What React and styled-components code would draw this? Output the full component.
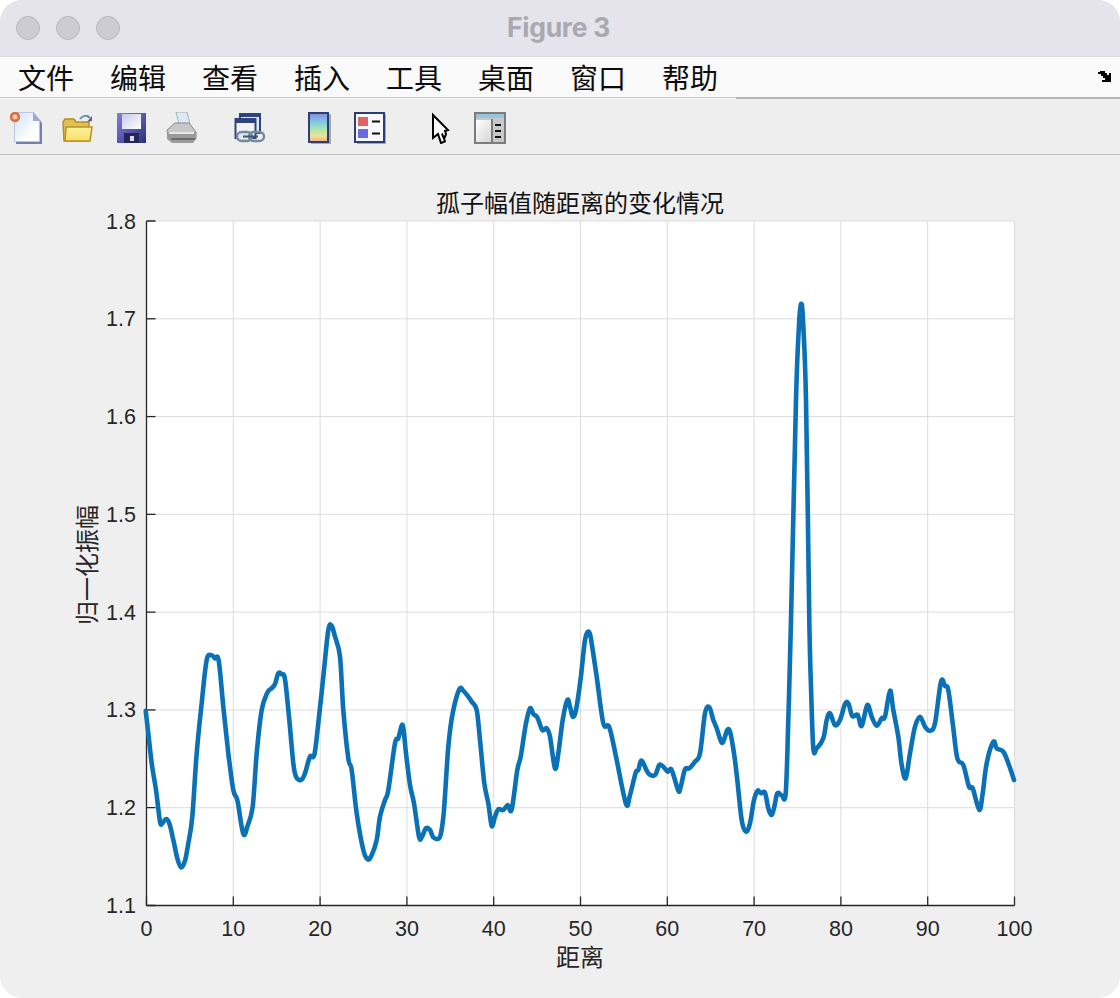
import React from "react";
import styled, { createGlobalStyle } from "styled-components";

const CJK = `"Noto Sans CJK SC", "Noto Sans", sans-serif`;
const LATIN = `"Liberation Sans", "Noto Sans CJK SC", sans-serif`;

const GlobalStyle = createGlobalStyle`
    html, body {
        margin: 0;
        padding: 0;
        background: #ffffff;
    }
`;

const Window = styled.div`
    width: 1120px;
    height: 998px;
    display: flex;
    flex-direction: column;
    border-radius: 22px;
    overflow: hidden;
    background: #efefef;
`;

const TitleBar = styled.div`
    height: 56px;
    flex: none;
    display: flex;
    align-items: center;
    background: #e5e3ec;
    border-bottom: 1px solid #d9d8dd;
    padding-left: 16px;
`;

const Light = styled.span`
    box-sizing: border-box;
    width: 24px;
    height: 24px;
    margin-right: 16px;
    border-radius: 50%;
    background: #cdcbd4;
    border: 1px solid #b9b7c0;
`;

const WindowTitle = styled.div`
    flex: 1;
    margin-right: 139px;
    padding-bottom: 2px;
    text-align: center;
    font: bold 26.5px "Inter", ${LATIN};
    letter-spacing: -0.3px;
    color: #aaa8b0;
`;

const MenuBar = styled.div`
    height: 40px;
    flex: none;
    display: flex;
    align-items: center;
    gap: 38px;
    padding-left: 18px;
    padding-right: 8px;
    background: #fafafa;
`;

const MenuItem = styled.span`
    font: 400 28px/40px ${CJK};
    width: 54px;
    white-space: nowrap;
    color: #0c0c0c;
`;

const MenuArrow = styled.svg`
    margin-left: auto;
    width: 14px;
    height: 11px;
    margin-top: -2px;
`;

const MenuRule = styled.div`
    height: 2px;
    flex: none;
    display: flex;
    background: #fafafa;
`;

const RuleLeft = styled.div`
    width: 736px;
    border-top: 1px solid #c9c9c9;
`;

const RuleRight = styled.div`
    flex: 1;
    background: #b4b4b4;
`;

const ToolBar = styled.div`
    height: 56px;
    flex: none;
    display: flex;
    align-items: flex-start;
    box-sizing: border-box;
    padding: 13px 0 0 10px;
    background: #eeeeee;
    border-bottom: 1px solid #c2c2c2;
`;

const Tool = styled.svg`
    width: 32px;
    height: 32px;
    flex: none;
    margin-left: ${(p) => p.$gap || 0}px;
`;

const Canvas = styled.svg`
    display: block;
    flex: 1;
    width: 1120px;
`;

const PlotArea = styled.rect`
    fill: #ffffff;
`;

const GridLine = styled.line`
    stroke: #dcdcdc;
    stroke-width: 1;
`;

const AxisLine = styled.line`
    stroke: #262626;
    stroke-width: 1.3;
`;

const TickLabel = styled.text`
    font: 400 21.5px ${LATIN};
    fill: #262626;
`;

const AxisTitle = styled.text`
    font: 400 24px ${CJK};
    fill: #262626;
    text-anchor: middle;
`;

const PlotTitle = styled.text`
    font: 400 24px ${CJK};
    fill: #111111;
    text-anchor: middle;
`;

const Trace = styled.path`
    fill: none;
    stroke: #0a71b6;
    stroke-width: 4.6;
    stroke-linejoin: round;
    stroke-linecap: round;
`;

const menus = ["文件", "编辑", "查看", "插入", "工具", "桌面", "窗口", "帮助"];

const LEFT = 146.5;
const RIGHT = 1014.5;
const TOP = 221;
const BOTTOM = 905.5;

const xPos = (v) => LEFT + ((RIGHT - LEFT) * v) / 100;
const yPos = (v) => TOP + ((BOTTOM - TOP) * (1.8 - v)) / 0.7;

const xTicks = [0, 10, 20, 30, 40, 50, 60, 70, 80, 90, 100];
const yTicks = [1.1, 1.2, 1.3, 1.4, 1.5, 1.6, 1.7, 1.8];

// traced from the plot, in three 3x crops
const traceA = [
    [47, 272], [55, 340], [65, 430], [78, 510], [90, 605], [97, 610], [108, 597], [118, 610], [130, 660], [142, 715],
    [153, 742], [165, 722], [175, 670], [187, 590], [200, 400], [215, 250], [230, 120], [245, 106], [255, 115], [266, 122],
    [280, 260], [295, 400], [310, 510], [322, 540], [335, 620], [343, 645], [352, 620], [368, 560], [380, 400], [395, 270],
    [412, 218], [425, 205], [435, 192], [445, 160], [455, 163], [465, 178], [478, 300], [490, 430], [498, 470], [513, 480],
    [525, 460], [540, 410], [553, 405], [565, 310], [580, 170], [595, 30], [605, 18], [615, 50], [630, 110], [640, 270],
    [655, 415], [665, 450], [680, 580], [700, 690], [713, 718], [725, 705], [740, 660], [750, 590], [765, 540], [775, 510],
    [795, 370], [805, 355], [818, 315], [828, 400], [840, 495], [852, 550], [867, 650], [875, 652], [888, 625],
];
const traceB = [
    [0, 630], [10, 652], [25, 656], [33, 640], [42, 570], [55, 380], [68, 280], [88, 208], [100, 212], [115, 230],
    [125, 245], [140, 270], [150, 360], [163, 490], [175, 550], [185, 618], [195, 590], [205, 568], [220, 570], [233, 555],
    [245, 568], [262, 450], [272, 410], [288, 310], [300, 265], [310, 282], [322, 292], [337, 330], [350, 325], [360, 350],
    [375, 445], [385, 400], [398, 300], [412, 240], [420, 260], [428, 290], [438, 270], [452, 175], [465, 60], [477, 35],
    [485, 70], [500, 170], [520, 310], [538, 322], [560, 420], [588, 552], [600, 525], [617, 458], [625, 450], [635, 422],
    [655, 460], [675, 465], [688, 435], [700, 440], [713, 455], [725, 450], [745, 512], [752, 500], [765, 448], [778, 445],
    [795, 425], [810, 400], [825, 280], [838, 262], [850, 300], [860, 325], [875, 368], [885, 350], [892, 330],
];
const traceC = [
    [0, 335], [12, 400], [22, 480], [35, 600], [48, 635], [60, 610], [72, 540], [83, 512], [93, 520], [105, 518],
    [115, 565], [125, 585], [133, 560], [142, 520], [155, 526], [167, 520], [175, 300], [183, 0], [198, -660], [207, -885],
    [213, -948], [219, -900], [228, -660], [238, 0], [243, 200], [250, 385], [260, 385], [280, 355], [290, 300], [300, 280],
    [315, 315], [330, 300], [345, 252], [355, 250], [367, 288], [383, 285], [395, 318], [412, 255], [425, 290], [440, 317],
    [455, 295], [465, 290], [480, 212], [490, 270], [505, 350], [515, 435], [527, 475], [540, 400], [555, 320], [570, 290],
    [585, 320], [600, 332], [615, 310], [633, 185], [645, 198], [655, 210], [668, 310], [682, 415], [700, 435], [717, 500],
    [728, 505], [748, 570], [758, 520], [770, 430], [790, 365], [800, 385], [820, 395], [835, 430], [852, 480],
];

const points = [
    ...traceA.map(([x, y]) => [130 + x / 3, 620 + y / 3]),
    ...traceB.map(([x, y]) => [430 + x / 3, 620 + y / 3]),
    ...traceC.map(([x, y]) => [730 + x / 3, 620 + y / 3]),
];

// catmull-rom through the traced points
function smoothPath(pts) {
    let d = `M${pts[0][0].toFixed(1)} ${pts[0][1].toFixed(1)}`;
    for (let i = 0; i < pts.length - 1; i++) {
        const p0 = pts[i - 1] || pts[i];
        const p1 = pts[i];
        const p2 = pts[i + 1];
        const p3 = pts[i + 2] || p2;
        const c1x = p1[0] + (p2[0] - p0[0]) / 6;
        const c1y = p1[1] + (p2[1] - p0[1]) / 6;
        const c2x = p2[0] - (p3[0] - p1[0]) / 6;
        const c2y = p2[1] - (p3[1] - p1[1]) / 6;
        d += `C${c1x.toFixed(1)} ${c1y.toFixed(1)} ${c2x.toFixed(1)} ${c2y.toFixed(1)} ${p2[0].toFixed(1)} ${p2[1].toFixed(1)}`;
    }
    return d;
}

const NewIcon = ({ gap }) => (
    <Tool $gap={gap} viewBox="0 0 32 32">
        <defs>
            <linearGradient id="paper" x1="0" y1="0" x2="1" y2="1">
                <stop offset="0" stopColor="#cfe0f8" />
                <stop offset="0.7" stopColor="#ffffff" />
            </linearGradient>
        </defs>
        <path d="M6 3h19l7 8v21H6z" fill="#7480ac" />
        <path d="M4.500 .5h19l6 8v21h-25z" fill="url(#paper)" stroke="#b8c6e4" />
        <path d="M23 0l8 9h-8z" fill="#a4a4d2" />
        <circle cx="5" cy="5" r="3.800" fill="#f4d4b0" stroke="#d8724a" strokeWidth="2.800" />
    </Tool>
);

const OpenIcon = ({ gap }) => (
    <Tool $gap={gap} viewBox="0 0 32 32">
        <defs>
            <linearGradient id="folder" x1="0" y1="0" x2="0" y2="1">
                <stop offset="0" stopColor="#fdf0a0" />
                <stop offset="1" stopColor="#fbe064" />
            </linearGradient>
        </defs>
        <path d="M1 10l2-3h9l2 3h13v19H2z" fill="#e2c050" stroke="#b48c28" strokeWidth="1.400" />
        <path d="M4 15h26l-2 14H3z" fill="url(#folder)" stroke="#b99228" strokeWidth="1.600" />
        <path d="M18 7c3-4 7-4 10-1" fill="none" stroke="#7088a8" strokeWidth="2" />
        <path d="M25 10l5-1v-5z" fill="#46688c" />
    </Tool>
);

const SaveIcon = ({ gap }) => (
    <Tool $gap={gap} viewBox="0 0 32 32">
        <defs>
            <linearGradient id="disk" x1="0" y1="0" x2="1" y2="1">
                <stop offset="0" stopColor="#8080dc" />
                <stop offset="1" stopColor="#30307c" />
            </linearGradient>
            <linearGradient id="label" x1="0" y1="0" x2="1" y2="1">
                <stop offset="0" stopColor="#c8c8ec" />
                <stop offset="1" stopColor="#ffffff" />
            </linearGradient>
        </defs>
        <rect x="2" y="1" width="29" height="30" fill="url(#disk)" />
        <rect x="7" y="2" width="19" height="15" fill="url(#label)" />
        <rect x="9" y="21" width="15" height="10" fill="#26265e" />
        <rect x="15" y="24" width="4" height="5" fill="#d8d8e8" />
    </Tool>
);

const PrintIcon = ({ gap }) => (
    <Tool $gap={gap} viewBox="0 0 32 32">
        <path d="M10 0h11l3 12H13z" fill="#dce8f6" stroke="#a8b0b8" />
        <path d="M1 18l8-7h14l7 9v7H2z" fill="#c8c8c8" stroke="#8a8a8a" />
        <path d="M1 20h29v7l-3 4H6l-5-4z" fill="#9b9b9b" />
        <path d="M3 21h25" stroke="#e8e8e8" strokeWidth="2" />
        <path d="M5 27h24" stroke="#6c6c6c" strokeWidth="2" />
    </Tool>
);

const LinkIcon = ({ gap }) => (
    <Tool $gap={gap} viewBox="0 0 32 32">
        <rect x="6" y="2" width="20" height="19" fill="#e4e8f2" stroke="#2c4480" strokeWidth="2" />
        <rect x="6" y="1" width="20" height="4" fill="#2c4480" />
        <rect x="1.500" y="7" width="20" height="19" fill="#f2f2f6" stroke="#2c4480" strokeWidth="2" />
        <rect x="1" y="7" width="21" height="4" fill="#2c4480" />
        <rect x="3" y="20" width="15" height="9" rx="4.500" fill="#dfe6ee" stroke="#76889c" strokeWidth="2.400" />
        <rect x="15" y="20" width="15" height="9" rx="4.500" fill="none" stroke="#76889c" strokeWidth="2.400" />
        <path d="M9 24.500h15" stroke="#3c5470" strokeWidth="2" />
    </Tool>
);

const ColorbarIcon = ({ gap }) => (
    <Tool $gap={gap} viewBox="0 0 32 32">
        <defs>
            <linearGradient id="rainbow" x1="0" y1="0" x2="0" y2="1">
                <stop offset="0" stopColor="#8b86e2" />
                <stop offset="0.3" stopColor="#7fc8e4" />
                <stop offset="0.55" stopColor="#a8e4b4" />
                <stop offset="0.8" stopColor="#f2e294" />
                <stop offset="1" stopColor="#f2a890" />
            </linearGradient>
        </defs>
        <rect x="9" y="2" width="20" height="30" fill="#a8a8b0" />
        <rect x="7" y="1" width="19" height="29" fill="url(#rainbow)" stroke="#2c3f70" strokeWidth="2" />
    </Tool>
);

const LegendIcon = ({ gap }) => (
    <Tool $gap={gap} viewBox="0 0 32 32">
        <rect x="3" y="2" width="29" height="30" fill="#a8a8b0" />
        <rect x="1" y="1" width="29" height="29" fill="#f8f8fc" stroke="#2c3f70" strokeWidth="2" />
        <rect x="4" y="5" width="10" height="9" fill="#e06464" />
        <rect x="4" y="17" width="10" height="9" fill="#6a6ae0" />
        <path d="M18 9.500h8M18 21.500h8" stroke="#101010" strokeWidth="2" />
    </Tool>
);

const PointerIcon = ({ gap }) => (
    <Tool $gap={gap} viewBox="0 0 32 32">
        <path
            d="M7 3v23l5-4 3 9 4-1.500-3-8h0l1 3 2 .5 1-3-1-3 3-1z"
            fill="#ffffff"
            stroke="#000000"
            strokeWidth="2"
            strokeLinejoin="miter"
        />
    </Tool>
);

const PanelIcon = ({ gap }) => (
    <Tool $gap={gap} viewBox="0 0 32 32">
        <defs>
            <linearGradient id="pane" x1="0" y1="0" x2="1" y2="1">
                <stop offset="0" stopColor="#ffffff" />
                <stop offset="1" stopColor="#d4d4d4" />
            </linearGradient>
        </defs>
        <rect x="1" y="1" width="30" height="30" fill="#c8c8c8" stroke="#7c7c7c" strokeWidth="2" />
        <rect x="2" y="2" width="28" height="4" fill="#98c4de" />
        <rect x="2" y="8" width="16" height="22" fill="url(#pane)" />
        <path d="M18 7v24" stroke="#7c7c7c" strokeWidth="2" />
        <path d="M21 13h6M21 19h6M21 25h6" stroke="#101010" strokeWidth="2" />
    </Tool>
);

export default function App() {
    return (
        <Window>
            <GlobalStyle />
            <TitleBar>
                <Light />
                <Light />
                <Light />
                <WindowTitle>Figure 3</WindowTitle>
            </TitleBar>
            <MenuBar>
                {menus.map((m) => (
                    <MenuItem key={m}>{m}</MenuItem>
                ))}
                <MenuArrow viewBox="0 0 14 11">
                    <path d="M0 1h2V0h5v2h2v2h2V2h2v9H4V9h3V7h-2V5h-2V3H0z" fill="#000000" />
                </MenuArrow>
            </MenuBar>
            <MenuRule>
                <RuleLeft />
                <RuleRight />
            </MenuRule>
            <ToolBar>
                <NewIcon />
                <OpenIcon gap={20} />
                <SaveIcon gap={21} />
                <PrintIcon gap={19} />
                <LinkIcon gap={36} />
                <ColorbarIcon gap={36} />
                <LegendIcon gap={20} />
                <PointerIcon gap={40} />
                <PanelIcon gap={16} />
            </ToolBar>
            <Canvas viewBox="0 155 1120 843">
                <PlotArea x={LEFT} y={TOP} width={RIGHT - LEFT} height={BOTTOM - TOP} />
                {xTicks.slice(1).map((v) => (
                    <GridLine key={v} x1={xPos(v)} x2={xPos(v)} y1={TOP} y2={BOTTOM} />
                ))}
                {yTicks.slice(1).map((v) => (
                    <GridLine key={v} x1={LEFT} x2={RIGHT} y1={yPos(v)} y2={yPos(v)} />
                ))}
                <AxisLine x1={LEFT} x2={LEFT} y1={TOP} y2={BOTTOM} />
                <AxisLine x1={LEFT} x2={RIGHT} y1={BOTTOM} y2={BOTTOM} />
                {xTicks.map((v) => (
                    <AxisLine key={v} x1={xPos(v)} x2={xPos(v)} y1={BOTTOM} y2={BOTTOM - 9} />
                ))}
                {yTicks.map((v) => (
                    <AxisLine key={v} x1={LEFT} x2={LEFT + 9} y1={yPos(v)} y2={yPos(v)} />
                ))}
                <Trace d={smoothPath(points)} />
                {xTicks.map((v) => (
                    <TickLabel key={v} x={xPos(v)} y={935.5} textAnchor="middle">
                        {v}
                    </TickLabel>
                ))}
                {yTicks.map((v) => (
                    <TickLabel key={v} x={136} y={yPos(v) + 7.5} textAnchor="end">
                        {v.toFixed(1)}
                    </TickLabel>
                ))}
                <PlotTitle x={580} y={212}>孤子幅值随距离的变化情况</PlotTitle>
                <AxisTitle x={580} y={966}>距离</AxisTitle>
                <AxisTitle transform="translate(96 565) rotate(-90)">归一化振幅</AxisTitle>
            </Canvas>
        </Window>
    );
}
